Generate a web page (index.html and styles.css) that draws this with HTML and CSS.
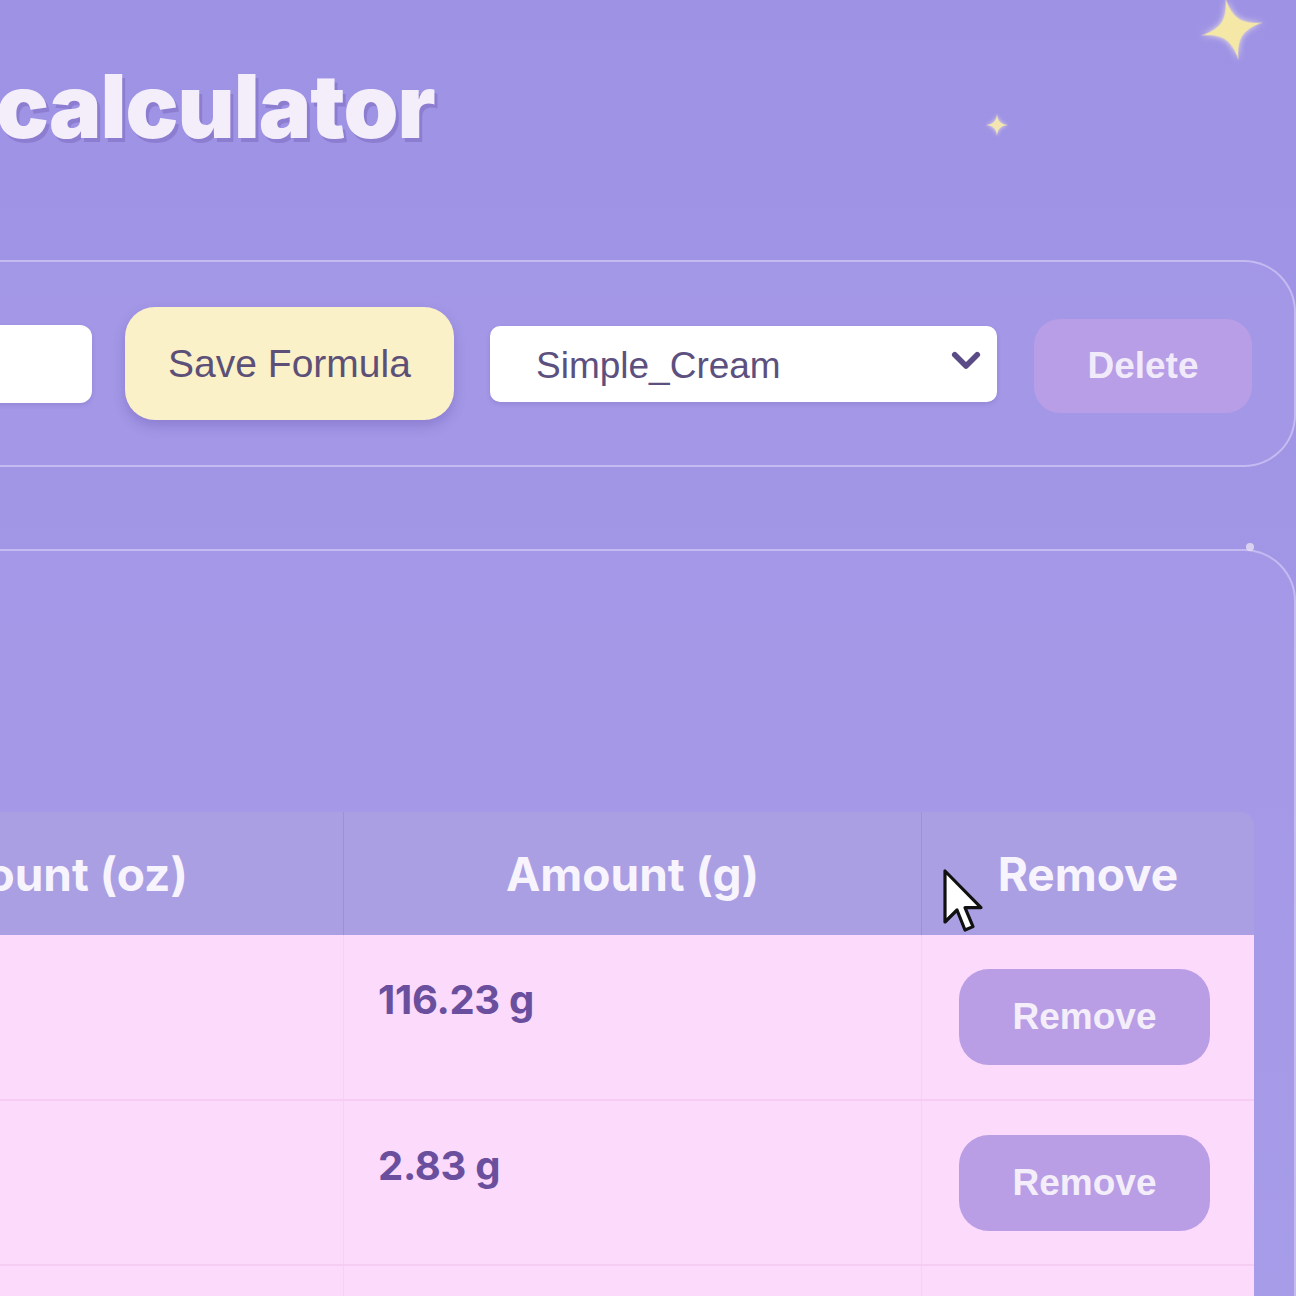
FILE: index.html
```html
<!DOCTYPE html>
<html lang="en">
<head>
<meta charset="utf-8">
<title>calculator</title>
<link rel="stylesheet" href="styles.css">
</head>
<body>
<div class="page">
  <header class="hero">
    <h1 class="title">calculator</h1>
  </header>

  <section class="panel toolbar">
    <input class="name-input" type="text" value="">
    <button class="btn-save">Save Formula</button>
    <div class="select-wrap">
      <span class="select-text">Simple_Cream</span>
      <svg class="chev" viewBox="0 0 24 16" width="30" height="20"><path d="M3 3 L12 12 L21 3" fill="none" stroke="#5a4a86" stroke-width="4.5" stroke-linecap="round" stroke-linejoin="round"/></svg>
    </div>
    <button class="btn-delete">Delete</button>
  </section>

  <section class="panel table-panel">
    <div class="table-space"></div>
    <table class="ing-table">
      <thead>
        <tr>
          <th class="c1">Amount (oz)</th>
          <th class="c2">Amount (g)</th>
          <th class="c3">Remove</th>
        </tr>
      </thead>
      <tbody>
        <tr>
          <td class="c1">4.10 oz</td>
          <td class="c2">116.23 g</td>
          <td class="c3"><button class="btn-remove">Remove</button></td>
        </tr>
        <tr>
          <td class="c1">0.10 oz</td>
          <td class="c2">2.83 g</td>
          <td class="c3"><button class="btn-remove">Remove</button></td>
        </tr>
        <tr>
          <td class="c1"></td>
          <td class="c2"></td>
          <td class="c3"></td>
        </tr>
      </tbody>
    </table>
  </section>
</div>

<svg class="star star-big" viewBox="0 0 100 100"><path d="M50 0 C54 34 66 46 100 50 C66 54 54 66 50 100 C46 66 34 54 0 50 C34 46 46 34 50 0 Z" fill="#f5e8a6"/></svg>
<svg class="star star-small" viewBox="0 0 100 100"><path d="M50 0 C54 34 66 46 100 50 C66 54 54 66 50 100 C46 66 34 54 0 50 C34 46 46 34 50 0 Z" fill="#f3e6b0"/></svg>
<svg class="star star-tiny" viewBox="0 0 100 100"><circle cx="50" cy="50" r="40" fill="#e9e0f5"/></svg>

<svg class="cursor" viewBox="0 0 21 34" width="42" height="68"><path d="M1.5 1.5 L1.5 27 L7.5 21 L11.5 31 L15.5 29.3 L11.5 19.8 L19.5 19.8 Z" fill="#ffffff" stroke="#111111" stroke-width="1.6" stroke-linejoin="round"/></svg>
</body>
</html>
```

FILE: styles.css
```css
html, body {
  margin: 0;
  padding: 0;
}
body {
  width: 1296px;
  height: 1296px;
  overflow: hidden;
  background: linear-gradient(180deg, #9e92e5 0%, #a296e6 50%, #a69be7 100%);
  font-family: "Liberation Sans", Arial, sans-serif;
  position: relative;
}
.page {
  margin-left: -305px;
  width: 1601px;
  display: flex;
  flex-direction: column;
}
.hero {
  height: 260px;
  display: flex;
  align-items: flex-start;
}
.title {
  margin: 62px 0 0 301px;
  font-family: Inter, "Noto Sans", sans-serif;
  font-weight: 900;
  font-size: 88px;
  line-height: 1;
  letter-spacing: -1px;
  color: #f4eefb;
  text-shadow: 3px 4px 0 rgba(105, 85, 170, 0.35);
}
.panel {
  border: 2px solid rgba(225, 215, 250, 0.55);
  border-radius: 52px;
  background: rgba(170, 160, 235, 0.25);
  box-sizing: border-box;
}
.toolbar {
  height: 207px;
  display: flex;
  align-items: center;
  gap: 36px;
  padding: 0 42px;
}
.name-input {
  flex: 1;
  height: 76px;
  border: none;
  border-radius: 12px;
  background: #ffffff;
  margin-right: -3px;
  box-shadow: 0 2px 4px rgba(90, 70, 150, 0.2);
}
.btn-save {
  width: 329px;
  height: 113px;
  border: none;
  border-radius: 30px;
  background: #fbf1c9;
  color: #5d5078;
  font-family: "Liberation Sans", Arial, sans-serif;
  font-size: 39px;
  box-shadow: 0 6px 12px rgba(90, 70, 160, 0.3);
}
.select-wrap {
  width: 507px;
  height: 76px;
  box-sizing: border-box;
  background: #ffffff;
  border-radius: 10px;
  display: flex;
  align-items: center;
  justify-content: space-between;
  padding: 0 16px 0 46px;
  box-shadow: 0 2px 4px rgba(90, 70, 150, 0.2);
}
.select-text {
  font-size: 37px;
  color: #5c5080;
  margin-top: 4px;
}
.chev {
  margin-top: -6px;
}
.btn-delete {
  width: 218px;
  height: 94px;
  margin-left: 1px;
  margin-top: 4px;
  border: none;
  border-radius: 26px;
  background: #b89ee6;
  color: #f1eafb;
  font-family: "Liberation Sans", Arial, sans-serif;
  font-weight: 700;
  font-size: 37px;
}
.table-panel {
  margin-top: 82px;
  padding: 0 42px 0 42px;
  height: 900px;
  border-bottom: none;
}
.table-space {
  height: 261px;
}
.ing-table {
  width: 100%;
  border-collapse: collapse;
  table-layout: fixed;
  font-family: Inter, "Noto Sans", sans-serif;
}
.ing-table th.c1 { width: 588px; }
.ing-table th.c2 { width: 577px; }
.ing-table th.c3 { width: 332px; }
.ing-table thead tr {
  background: #ab9fe4;
}
.ing-table th {
  height: 123px;
  padding: 0;
  color: #f8f4fd;
  font-weight: 700;
  font-size: 46px;
  letter-spacing: 0;
  text-align: center;
  border-right: 1px solid #9d90da;
}
.ing-table th.c1 {
  padding-left: 16px;
}
.ing-table th.c3 {
  border-right: none;
  border-top-right-radius: 14px;
}
.ing-table tbody tr {
  background: #fbdafb;
  height: 165px;
  border-bottom: 2px solid #f5cdf2;
}
.ing-table td {
  padding: 0;
  border-right: 1px solid #f3d2f3;
  vertical-align: top;
}
.ing-table td.c1, .ing-table td.c2 {
  padding: 40px 0 0 34px;
  color: #6a4f9e;
  font-weight: 700;
  font-size: 40px;
  letter-spacing: -0.3px;
}
.ing-table td.c3 {
  border-right: none;
  vertical-align: middle;
  padding-left: 37px;
}
.btn-remove {
  width: 251px;
  height: 96px;
  border: none;
  border-radius: 30px;
  background: #b99ee6;
  color: #f4eefb;
  font-family: "Liberation Sans", Arial, sans-serif;
  font-weight: 700;
  font-size: 37px;
  display: block;
}
.star {
  position: absolute;
}
.star-big {
  left: 1200px;
  top: -3px;
  width: 64px;
  height: 64px;
  transform: rotate(-12deg);
  filter: drop-shadow(0 0 3px rgba(255, 250, 220, 0.8));
}
.star-small {
  left: 986px;
  top: 113px;
  width: 22px;
  height: 24px;
  filter: drop-shadow(0 0 2px rgba(255, 250, 220, 0.8));
}
.star-tiny {
  left: 1245px;
  top: 542px;
  width: 10px;
  height: 10px;
  opacity: 0.8;
}
.cursor {
  position: absolute;
  left: 942px;
  top: 868px;
}
```
